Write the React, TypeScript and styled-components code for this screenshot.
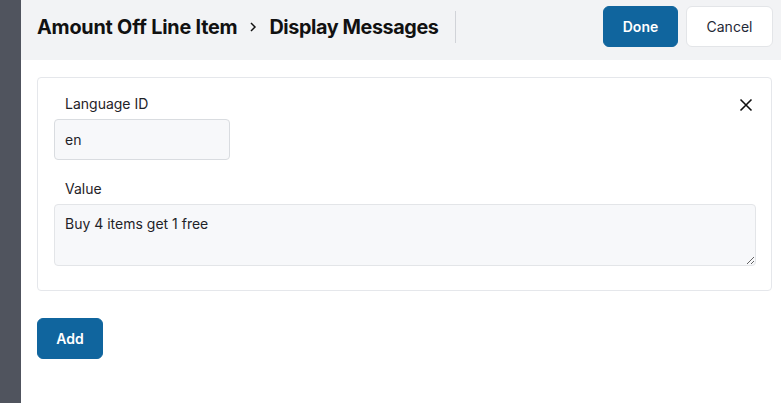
import React from "react";
import styled, { createGlobalStyle } from "styled-components";

const Global = createGlobalStyle`
  html, body { margin: 0; padding: 0; background: #ffffff; }
  body { font-family: Inter, "Noto Sans", Arial, sans-serif; color: #111827; }
  * { box-sizing: border-box; }
`;

const Shell = styled.div`
  display: flex;
  width: 781px;
  height: 403px;
  overflow: hidden;
`;

const SideStrip = styled.div`
  width: 21px;
  flex: none;
  background: #50545e;
`;

const Main = styled.div`
  flex: 1;
  display: flex;
  flex-direction: column;
  min-width: 0;
`;

const Header = styled.header`
  height: 60px;
  background: #f2f3f5;
  display: flex;
  align-items: center;
  padding: 0 8px 7px 16px;
`;

const Title = styled.h1`
  margin: 0;
  font-size: 19.8px;
  font-weight: 700;
  letter-spacing: -0.2px;
  color: #111111;
  display: flex;
  align-items: center;
  gap: 10px;
`;

const TitlePart = styled.span<{ $tight?: boolean }>`
  letter-spacing: ${(p) => (p.$tight ? "-0.4px" : "-0.2px")};
`;

const Chevron = styled.svg`
  width: 12px;
  height: 12px;
`;

const Divider = styled.div`
  width: 1px;
  height: 32px;
  background: #d1d3d8;
  margin-left: 16px;
`;

const Spacer = styled.div`
  flex: 1;
`;

const Button = styled.button<{ $variant?: "primary" | "secondary"; $width: number }>`
  width: ${(p) => p.$width}px;
  height: 41px;
  border-radius: 6px;
  font-family: inherit;
  font-size: 14px;
  font-weight: ${(p) => (p.$variant === "secondary" ? 400 : 600)};
  padding: 0;
  cursor: pointer;
  border: 1px solid ${(p) => (p.$variant === "secondary" ? "#e3e5e8" : "#10659e")};
  background: ${(p) => (p.$variant === "secondary" ? "#ffffff" : "#10659e")};
  color: ${(p) => (p.$variant === "secondary" ? "#1f2937" : "#ffffff")};
`;

const Actions = styled.div`
  display: flex;
  gap: 8px;
`;

const Content = styled.div`
  padding: 17px 9px 0 16px;
  display: flex;
  flex-direction: column;
  align-items: flex-start;
`;

const Card = styled.section`
  position: relative;
  width: 100%;
  height: 214px;
  border: 1px solid #e5e7eb;
  border-radius: 4px;
  padding: 17px 16px 0 16px;
  display: flex;
  flex-direction: column;
`;

const CloseButton = styled.button`
  position: absolute;
  top: 17px;
  right: 15px;
  width: 20px;
  height: 20px;
  padding: 0;
  border: none;
  background: transparent;
  display: flex;
  align-items: center;
  justify-content: center;
  cursor: pointer;
`;

const Field = styled.div<{ $gap?: number }>`
  display: flex;
  flex-direction: column;
  margin-top: ${(p) => p.$gap ?? 0}px;
`;

const Label = styled.label`
  font-size: 14px;
  color: #1f2328;
  padding-left: 11px;
  line-height: 18px;
  margin-bottom: 6px;
`;

const Input = styled.input`
  width: 176px;
  height: 41px;
  border: 1px solid #d9dce0;
  border-radius: 4px;
  background: #f7f8fa;
  padding: 0 10px;
  font-family: inherit;
  font-size: 14px;
  color: #1f2328;
  outline: none;
`;

const TextArea = styled.textarea`
  width: 702px;
  height: 62px;
  border: 1px solid #e3e5e8;
  border-radius: 4px;
  background: #f7f8fa;
  padding: 10px 10px;
  font-family: inherit;
  font-size: 14px;
  line-height: 18px;
  color: #1f2328;
  outline: none;
  resize: vertical;
`;

const AddButton = styled(Button)`
  margin-top: 27px;
`;

export default function App() {
  return (
    <>
      <Global />
      <Shell>
        <SideStrip />
        <Main>
          <Header>
            <Title>
              <TitlePart>Amount Off Line Item</TitlePart>
              <Chevron viewBox="0 0 12 12" fill="none">
                <path d="M4 2 L8 6 L4 10" stroke="#111" strokeWidth="1.5" />
              </Chevron>
              <TitlePart $tight>Display Messages</TitlePart>
            </Title>
            <Divider />
            <Spacer />
            <Actions>
              <Button $variant="primary" $width={75}>Done</Button>
              <Button $variant="secondary" $width={87}>Cancel</Button>
            </Actions>
          </Header>
          <Content>
            <Card>
              <CloseButton aria-label="Remove">
                <svg width="14" height="14" viewBox="0 0 14 14" fill="none">
                  <path d="M1.5 1.5 L12.5 12.5 M12.5 1.5 L1.5 12.5" stroke="#111" strokeWidth="1.6" />
                </svg>
              </CloseButton>
              <Field>
                <Label>Language ID</Label>
                <Input defaultValue="en" />
              </Field>
              <Field $gap={20}>
                <Label>Value</Label>
                <TextArea defaultValue="Buy 4 items get 1 free" />
              </Field>
            </Card>
            <AddButton $variant="primary" $width={66}>Add</AddButton>
          </Content>
        </Main>
      </Shell>
    </>
  );
}
